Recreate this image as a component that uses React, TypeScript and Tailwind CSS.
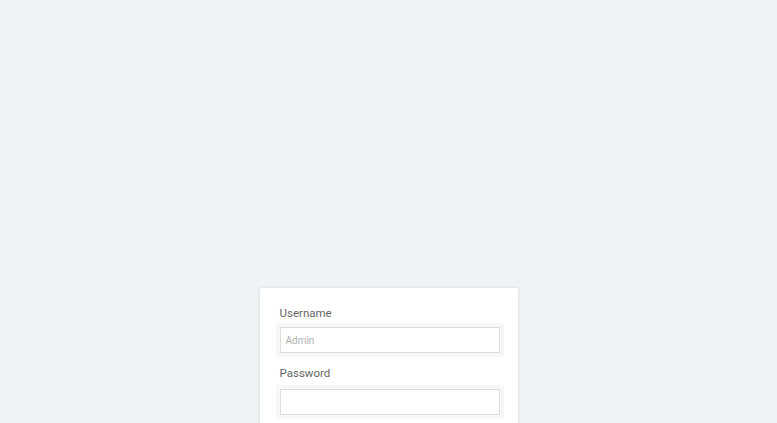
export default function App() {
    return (
        <div
            className="h-[423px] w-full bg-[#eff3f6] flex justify-center pt-[288px] overflow-hidden"
            style={{ fontFamily: 'Roboto, "Liberation Sans", Arial, sans-serif' }}
        >
            {/* Login card */}
            <div className="w-[258px] h-[200px] shrink-0 bg-white rounded-[2px] shadow-[0_0_3px_rgba(0,0,0,0.12)] pl-5 pt-[17px]">
                <label className="block text-[11.5px] leading-[17px] text-[#666] mb-[5px]">Username</label>
                <div className="w-[220px] h-[26px] border border-[#dcdcdc] shadow-[0_0_0_4px_#f5f7f9] bg-white flex items-center px-[5px]">
                    <span className="text-[10px] text-[#b0b0b0]">Admin</span>
                </div>

                <label className="block text-[11.5px] leading-[17px] text-[#666] mt-[12px] mb-[7px]">Password</label>
                <div className="w-[220px] h-[26px] border border-[#dcdcdc] shadow-[0_0_0_4px_#f5f7f9] bg-white" />
            </div>
        </div>
    );
}
